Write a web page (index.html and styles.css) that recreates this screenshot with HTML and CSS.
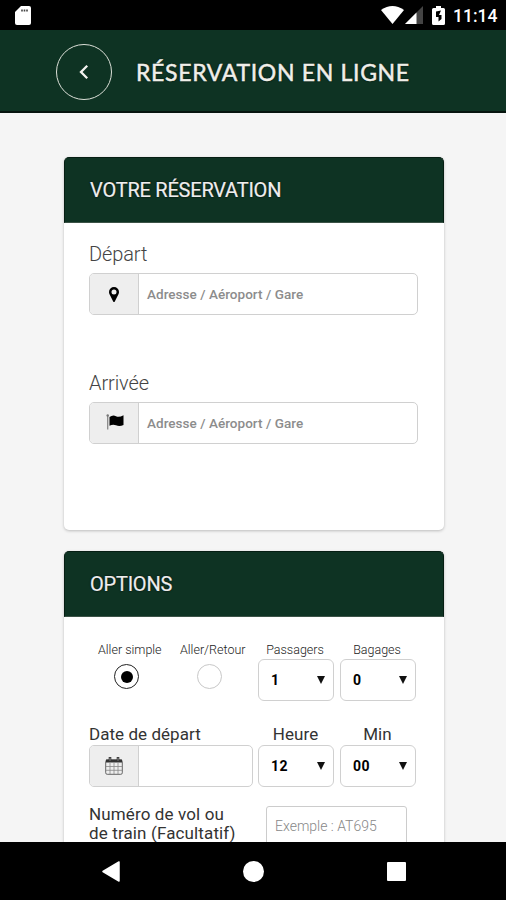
FILE: index.html
```html
<!DOCTYPE html>
<html lang="fr">
<head>
<meta charset="utf-8">
<title>Réservation en ligne</title>
<link rel="stylesheet" href="styles.css">
</head>
<body>
<div class="status">
  <svg class="sd" width="16" height="20" viewBox="0 0 16 20"><path fill="#fff" d="M6 0h8q2 0 2 2v15q0 2-2 2H2q-2 0-2-2V6z"/><path stroke="#444" stroke-width="1.600" d="M7 3.500v2M9.500 3.500v2M12 3.500v2"/></svg>
  <svg class="wifi" width="23" height="18" viewBox="0 0 23 18"><path fill="#fff" d="M0 4Q11.500-4 23 4L11.500 18z"/></svg>
  <svg class="signal" width="18" height="18" viewBox="0 0 18 18"><path fill="#444" d="M18 0v18H0z"/><path fill="#fff" d="M11.500 6.500V18H0z"/></svg>
  <svg class="battery" width="13" height="19" viewBox="0 0 13 19"><path fill="#fff" d="M4 0h5v2h2.500Q13 2 13 3.500v14q0 1.500-1.500 1.500h-10Q0 19 0 17.500v-14Q0 2 1.500 2H4z"/><path fill="#000" d="M9 4.500L4 5.500V11h2.500v4.500L9.500 13V9H7z"/></svg>
  <span class="clock">11:14</span>
</div>
<header class="topbar">
  <div class="back"><svg width="10" height="16" viewBox="0 0 10 16"><path fill="none" stroke="#f4f4f0" stroke-width="2.300" d="M8.200 1.800L2 8l6.200 6.200"/></svg></div>
  <h1>RÉSERVATION EN LIGNE</h1>
</header>
<main>
  <section class="card trip">
    <h2>VOTRE RÉSERVATION</h2>
    <div class="body">
      <div class="field">
        <label>Départ</label>
        <div class="group"><span class="addon"><svg width="10" height="15" viewBox="0 0 10 15"><path fill="#000" fill-rule="evenodd" d="M5 0a5 5 0 0 1 5 5c0 1.300-.4 2-.8 2.800L5.800 14.400q-.8 1.200-1.600 0L.8 7.800C.4 7 0 6.300 0 5a5 5 0 0 1 5-5zm0 2.500a2.500 2.500 0 1 0 0 5 2.500 2.500 0 0 0 0-5z"/></svg></span><span class="ph">Adresse / Aéroport / Gare</span></div>
      </div>
      <div class="field">
        <label>Arrivée</label>
        <div class="group"><span class="addon"><svg class="flag" width="18" height="16" viewBox="0 0 18 16"><path stroke="#888" stroke-width="1.300" d="M1.700 1v14.500"/><circle cx="1.700" cy="1.500" r="1.200" fill="#777"/><path fill="#000" d="M3.500 3Q7 .3 10 2.200q3 1.500 7.500-1V11q-4 2-7.500.3Q7 9.800 3.500 11.800z"/></svg></span><span class="ph">Adresse / Aéroport / Gare</span></div>
      </div>
    </div>
  </section>
  <section class="card options">
    <h2>OPTIONS</h2>
    <div class="body">
      <div class="row choices">
        <div class="radio first"><span class="small">Aller simple</span><i class="dot on"></i></div>
        <div class="radio second"><span class="small">Aller/Retour</span><i class="dot"></i></div>
        <div class="pick"><span class="small">Passagers</span><div class="select"><b>1</b><i class="arrow"></i></div></div>
        <div class="pick"><span class="small">Bagages</span><div class="select"><b>0</b><i class="arrow"></i></div></div>
      </div>
      <div class="row when">
        <div class="date"><span class="lab">Date de départ</span>
          <div class="group"><span class="addon"><svg class="cal" width="18" height="18" viewBox="0 0 18 18"><rect x=".7" y="3" width="16.600" height="14.300" rx="1.500" fill="#eee" stroke="#666"/><path fill="#333" d="M1 2.500h16V5.500H1z"/><path stroke="#888" stroke-width=".8" d="M1 9.500h16M1 13.300h16M5 6v11M9 6v11M13 6v11"/><path stroke="#333" stroke-width="2.600" d="M5 0v4M13 0v4"/><path stroke="#aaa" stroke-width=".8" d="M5 .7v3M13 .7v3"/></svg></span></div>
        </div>
        <div class="pick"><span class="lab">Heure</span><div class="select"><b>12</b><i class="arrow"></i></div></div>
        <div class="pick"><span class="lab">Min</span><div class="select"><b>00</b><i class="arrow"></i></div></div>
      </div>
      <div class="row flight">
        <div class="flight-label">Numéro de vol ou<br>de train (Facultatif)</div>
        <div class="flight-input"><span>Exemple : AT695</span></div>
      </div>
    </div>
  </section>
</main>
<nav>
  <svg width="18" height="21" viewBox="0 0 18 21"><path fill="#fff" stroke="#fff" stroke-width="1.500" stroke-linejoin="round" d="M17 1v19L1 10.500z"/></svg>
  <i class="home"></i>
  <i class="recent"></i>
</nav>
</body>
</html>
```
FILE: styles.css
```css
* { box-sizing: border-box; }
body { margin: 0; width: 506px; height: 900px; overflow: hidden; display: flex; flex-direction: column; background: #f5f5f5; font-family: Roboto, "Liberation Sans", sans-serif; color: #222; }
svg { display: block; flex: none; }
h1, h2 { margin: 0; font-weight: 400; white-space: nowrap; }
.status { flex: none; height: 30px; background: #000; display: flex; align-items: flex-start; padding: 6px 9px 0 15px; }
.wifi { margin-left: 350px; }
.signal { margin-left: 1px; }
.battery { margin-left: 9px; }
.clock { margin-left: 8px; font-size: 17.500px; line-height: 21px; font-weight: 500; color: #fff; white-space: nowrap; }
.topbar { flex: none; height: 83px; background: #0e3323; border-bottom: 2px solid #07150f; display: flex; align-items: center; padding: 0 0 0 56px; }
.back { width: 56px; height: 56px; border: 1.500px solid #dce0d8; border-radius: 50%; display: flex; align-items: center; justify-content: center; margin-top: 2px; }
h1 { margin: 2px 0 0 24px; font-family: Lato, sans-serif; font-size: 23px; line-height: 30px; letter-spacing: .68px; color: #f0efe9; -webkit-text-stroke: .5px #f0efe9; text-shadow: 0 0 2px #000; }
main { flex: none; height: 729px; overflow: hidden; padding: 44px 62px 0 64px; }
.card { width: 380px; background: #fff; border-radius: 5px; box-shadow: 0 1px 3px #bbb; }
.trip { height: 373px; }
.options { height: 400px; margin-top: 21px; }
h2 { height: 66px; padding: 0 0 0 25px; border: 1px solid #061e13; border-bottom-color: #3c5347; border-radius: 5px 5px 0 0; background: #0e3323; color: #eee; font-size: 20px; line-height: 64px; letter-spacing: -.22px; -webkit-text-stroke: .2px #eee; text-shadow: 0 0 2px #000; }
.body { padding: 0 26px 0 25px; }
.field { height: 129px; padding-top: 17px; }
.field label { display: block; width: max-content; height: 33px; line-height: 28px; font-size: 20px; letter-spacing: -.1px; font-weight: 300; color: #444; }
.group { height: 42px; border: 1px solid #d0d0d0; border-radius: 5px; display: flex; align-items: center; background: #fff; }
.addon { width: 49px; height: 100%; flex: none; border-right: 1px solid #d0d0d0; background: #eee; border-radius: 4px 0 0 4px; display: flex; align-items: center; justify-content: center; }
.flag { margin: -2px 0 0 1px; }
.ph { margin-left: 8px; font-size: 13.500px; font-weight: 500; letter-spacing: .04px; color: #8c8c8c; white-space: nowrap; }
.row { display: flex; }
.choices { padding-top: 25px; height: 106px; }
.small { display: block; width: max-content; height: 17px; margin-left: -2px; font-size: 12.500px; line-height: 16px; font-weight: 300; color: #222; white-space: nowrap; }
.radio { width: 82px; flex: none; }
.radio .small { margin-left: 0; }
.first { padding-left: 9px; }
.second { padding-left: 9px; width: 87px; }
.dot { display: flex; width: 25px; height: 25px; margin: 5px 0 0 16px; border: 1px solid #c8c8c8; border-radius: 50%; align-items: center; justify-content: center; }
.second .dot { margin-left: 17px; }
.on { border: 1.500px solid #222; }
.on::after { content: ""; width: 12px; height: 12px; border-radius: 50%; background: #000; }
.pick { width: 76px; flex: none; display: flex; flex-direction: column; align-items: center; }
.pick + .pick { margin-left: 6px; }
.select { width: 76px; height: 42px; border: 1px solid #d0d0d0; border-radius: 6px; display: flex; align-items: center; justify-content: space-between; padding: 0 8px 0 12px; }
.select b { font-size: 14px; letter-spacing: .4px; font-weight: 700; color: #000; }
.arrow { width: 8px; height: 8px; background: #111; clip-path: polygon(0 0, 100% 0, 50% 100%); }
.when { height: 82px; }
.lab { display: block; width: max-content; height: 22px; line-height: 22px; font-size: 17px; letter-spacing: .1px; color: #333; white-space: nowrap; }
.pick .lab { margin-left: -1px; }
.date { width: 164px; margin-right: 5px; }
.date .lab { letter-spacing: .05px; }
.cal { margin: -1px 1px 0 0; }
.flight-label { width: 177px; font-size: 17px; line-height: 19px; color: #333; letter-spacing: .13px; white-space: nowrap; }
.flight-input { width: 141px; height: 42px; margin-top: 1px; border: 1px solid #ccc; border-radius: 3px; padding: 9px 0 0 8px; font-size: 14px; line-height: 20px; color: #888; font-weight: 300; white-space: nowrap; }
nav { flex: none; height: 58px; background: #000; display: flex; align-items: center; padding-left: 102px; }
.home { width: 21px; height: 21px; border-radius: 50%; background: #fff; margin-left: 123px; }
.recent { width: 19px; height: 19px; border-radius: 1px; background: #fff; margin: 1px 0 0 123px; }
```
